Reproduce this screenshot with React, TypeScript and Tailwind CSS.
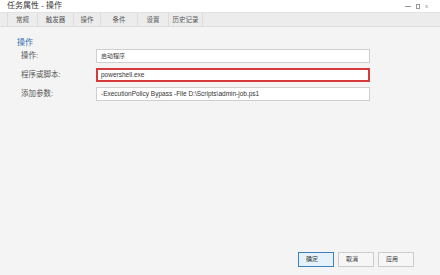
import { FC } from "react";

const tabs = [
  { name: "常规", w: "w-[30px]" },
  { name: "触发器", w: "w-[36px]" },
  { name: "操作", w: "w-[27px]" },
  { name: "条件", w: "w-[37px]" },
  { name: "设置", w: "w-[31px]" },
  { name: "历史记录", w: "w-[35px]" },
];

const font = "font-['Liberation_Sans','Noto_Sans_CJK_SC',sans-serif]";

const App: FC = () => {
  return (
    <div className={`w-[440px] h-[275px] flex flex-col bg-[#f4f4f4] text-[#333] overflow-hidden ${font}`}>
      {/* title bar */}
      <div className="h-[13px] bg-white flex items-center justify-between pl-[7px] pr-[12px] border-b border-[#e2e2e2]">
        <span className="text-[8px] leading-none text-[#333]">任务属性 - 操作</span>
        <div className="flex items-center gap-[5px] text-[#888]">
          <span className="block w-[6px] h-px bg-[#999]" />
          <span className="block w-[4px] h-[5px] border border-[#999]" />
          <span className="text-[6px] leading-none">x</span>
        </div>
      </div>

      {/* tabs */}
      <div className="h-[14px] bg-[#ececec] flex pl-[7px] border-b border-[#dedede]">
        {tabs.map((t) => (
          <div
            key={t.name}
            className={`${t.w} h-full flex items-center justify-center border-l border-[#dcdcdc] last:border-r text-[6.5px] text-[#555]`}
          >
            {t.name}
          </div>
        ))}
      </div>

      {/* content */}
      <div className="flex-1 pt-[10px] pl-[17px]">
        <div className="h-[11px] flex items-center text-[8px] text-[#2f6fb3]">操作</div>
        <div className="flex flex-col gap-[5px] mt-px">
          <div className="flex items-center h-[14px]">
            <span className="w-[79px] pl-[4px] text-[7.5px] text-[#555]">操作:</span>
            <div className="w-[274px] h-full bg-white border border-[#cfcfcf] flex items-center pl-[4px] text-[6px] text-[#444]">
              启动程序
            </div>
          </div>
          <div className="flex items-center h-[14px]">
            <span className="w-[79px] pl-[4px] text-[7.5px] text-[#555]">程序或脚本:</span>
            <div className="w-[274px] h-full bg-white border-2 border-[#d63a3a] flex items-center pl-[3px] text-[6.5px] text-[#333]">
              powershell.exe
            </div>
          </div>
          <div className="flex items-center h-[14px]">
            <span className="w-[79px] pl-[4px] text-[7.5px] text-[#555]">添加参数:</span>
            <div className="w-[274px] h-full bg-white border border-[#cfcfcf] flex items-center pl-[4px] text-[6.5px] text-[#333]">
              -ExecutionPolicy Bypass -File D:\Scripts\admin-job.ps1
            </div>
          </div>
        </div>
      </div>

      {/* buttons */}
      <div className="flex justify-end gap-[4px] pr-[26px] pb-[8px]">
        <button
          type="button"
          className="w-[36px] h-[15px] bg-[#e5f1fb] border border-[#3c7fc1] text-left pl-[7px] text-[6px] text-[#333]"
        >
          确定
        </button>
        <button
          type="button"
          className="w-[36px] h-[15px] bg-[#f6f6f6] border border-[#cccccc] text-left pl-[7px] text-[6px] text-[#333]"
        >
          取消
        </button>
        <button
          type="button"
          className="w-[36px] h-[15px] bg-[#f6f6f6] border border-[#cccccc] text-left pl-[7px] text-[6px] text-[#333]"
        >
          应用
        </button>
      </div>
    </div>
  );
};

export default App;
